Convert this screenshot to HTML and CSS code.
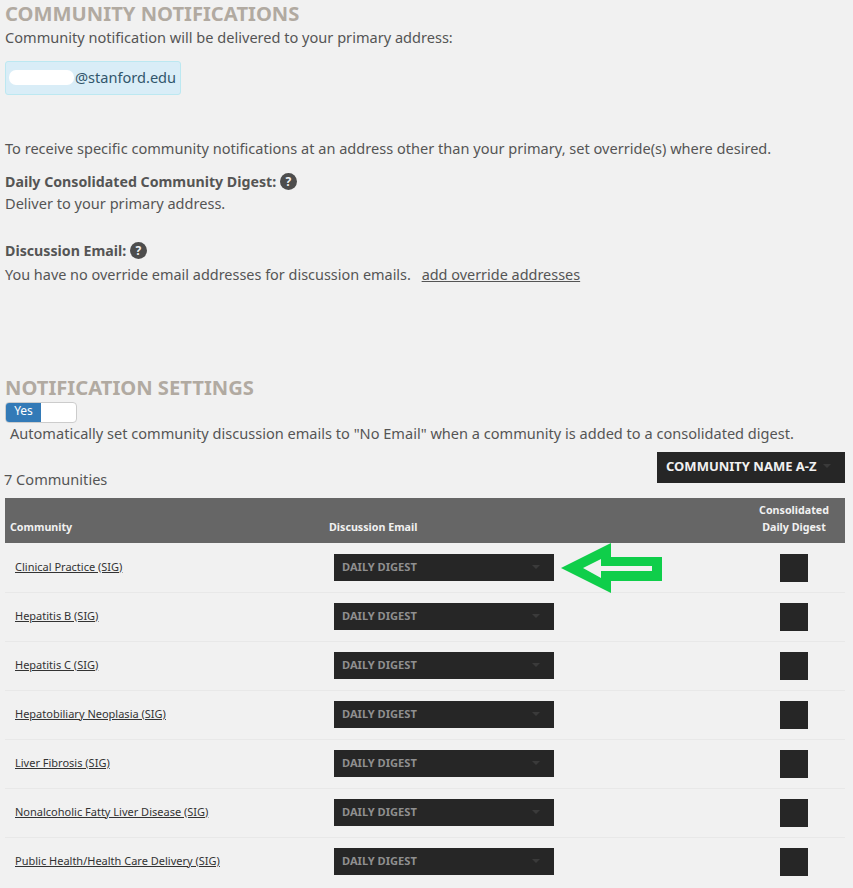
FILE: index.html
```html
<!DOCTYPE html>
<html lang="en">
<head>
  <meta charset="UTF-8">
  <meta name="viewport" content="width=device-width, initial-scale=1.0">
  <title>Community Notifications</title>
  <link rel="stylesheet" href="styles.css">
</head>
<body>
  <h2 class="section-title first-title">COMMUNITY NOTIFICATIONS</h2>
  <p class="line">Community notification will be delivered to your primary address:</p>
  <div class="address"><span class="blot"></span>@stanford.edu</div>

  <p class="line override-note">To receive specific community notifications at an address other than your primary, set override(s) where desired.</p>

  <p class="line label digest-label">Daily Consolidated Community Digest: <span class="help">?</span></p>
  <p class="line digest-text">Deliver to your primary address.</p>

  <p class="line label email-label">Discussion Email: <span class="help">?</span></p>
  <p class="line no-override">You have no override email addresses for discussion emails. <a class="add-link" href="#">add override addresses</a></p>

  <h2 class="section-title settings-title">NOTIFICATION SETTINGS</h2>
  <div class="toggle"><span class="toggle-on">Yes</span><span class="toggle-off"></span></div>
  <p class="line auto-note">Automatically set community discussion emails to "No Email" when a community is added to a consolidated digest.</p>

  <div class="list-bar">
    <span class="count">7 Communities</span>
    <div class="sort">COMMUNITY NAME A-Z<span class="caret"></span></div>
  </div>

  <div class="table">
    <div class="row head">
      <div class="col-name">Community</div>
      <div class="col-email">Discussion Email</div>
      <div class="col-digest">Consolidated<br>Daily Digest</div>
    </div>
    <div class="row">
      <div class="col-name"><a href="#">Clinical Practice (SIG)</a></div>
      <div class="col-email"><div class="select">DAILY DIGEST<span class="caret"></span></div></div>
      <div class="col-digest"><span class="check"></span></div>
    </div>
    <div class="row">
      <div class="col-name"><a href="#">Hepatitis B (SIG)</a></div>
      <div class="col-email"><div class="select">DAILY DIGEST<span class="caret"></span></div></div>
      <div class="col-digest"><span class="check"></span></div>
    </div>
    <div class="row">
      <div class="col-name"><a href="#">Hepatitis C (SIG)</a></div>
      <div class="col-email"><div class="select">DAILY DIGEST<span class="caret"></span></div></div>
      <div class="col-digest"><span class="check"></span></div>
    </div>
    <div class="row">
      <div class="col-name"><a href="#">Hepatobiliary Neoplasia (SIG)</a></div>
      <div class="col-email"><div class="select">DAILY DIGEST<span class="caret"></span></div></div>
      <div class="col-digest"><span class="check"></span></div>
    </div>
    <div class="row">
      <div class="col-name"><a href="#">Liver Fibrosis (SIG)</a></div>
      <div class="col-email"><div class="select">DAILY DIGEST<span class="caret"></span></div></div>
      <div class="col-digest"><span class="check"></span></div>
    </div>
    <div class="row">
      <div class="col-name"><a href="#">Nonalcoholic Fatty Liver Disease (SIG)</a></div>
      <div class="col-email"><div class="select">DAILY DIGEST<span class="caret"></span></div></div>
      <div class="col-digest"><span class="check"></span></div>
    </div>
    <div class="row">
      <div class="col-name"><a href="#">Public Health/Health Care Delivery (SIG)</a></div>
      <div class="col-email"><div class="select">DAILY DIGEST<span class="caret"></span></div></div>
      <div class="col-digest"><span class="check"></span></div>
    </div>
  </div>

  <!-- annotation drawn over the screenshot -->
  <svg class="arrow" width="853" height="888" viewBox="0 0 853 888">
    <path fill="#0fce4a" d="M561 568 611 543V557H662V581H611V593Z"/>
    <path fill="#f1f1f1" d="M583 568 601 559V566H652V571H601V578Z"/>
  </svg>
</body>
</html>
```

FILE: styles.css
```css
html, body {
  margin: 0;
  height: 888px;
  overflow: hidden;
}
body {
  position: relative;
  background-color: #f1f1f1;
  color: #555;
  font-family: 'Noto Sans', sans-serif;
  font-size: 14.57px;
  padding: 0 8px 0 5px;
  box-sizing: border-box;
}
.section-title {
  margin: 0;
  padding-bottom: 1px;
  height: 27px;
  line-height: 27px;
  font-size: 20.2px;
  font-weight: 700;
  color: #b1aaa1;
}
.first-title {
  height: 25px;
  line-height: 27px;
}
.settings-title {
  margin-top: 88px;
}
.line {
  margin: 0;
  height: 22px;
  line-height: 22px;
  white-space: nowrap;
}
.label {
  font-size: 14.2px;
  font-weight: 700;
  color: #555;
}
.address {
  display: flex;
  align-items: center;
  width: 176px;
  height: 34px;
  margin-top: 13px;
  box-sizing: border-box;
  padding-left: 69px;
  padding-bottom: 2px;
  background-color: #d9edf7;
  border: 1px solid #bce8f1;
  border-radius: 3px;
  color: #31566c;
  position: relative;
}
.blot {
  position: absolute;
  left: 3px;
  top: 8px;
  width: 65px;
  height: 15px;
  background-color: #fff;
  border-radius: 7px;
}
.override-note {
  margin-top: 42px;
}
.digest-label {
  margin-top: 12px;
}
.digest-text {
  margin-top: -1px;
}
.email-label {
  margin-top: 26px;
}
.no-override {
  margin-top: 2px;
  font-size: 14.45px;
}
.help {
  display: inline-block;
  width: 17px;
  height: 17px;
  border-radius: 50%;
  background-color: #4d4d4d;
  color: #f1f1f1;
  font-size: 12px;
  line-height: 17px;
  text-align: center;
  vertical-align: 1px;
}
.add-link {
  margin-left: 7px;
  color: #555;
}
.toggle {
  display: flex;
  width: 72px;
  height: 21px;
  box-sizing: border-box;
  border: 1px solid #ccc;
  border-radius: 4px;
  overflow: hidden;
  background-color: #fff;
}
.toggle-on {
  width: 35px;
  background-color: #337ab7;
  color: #fff;
  font-size: 12px;
  line-height: 16px;
  text-align: center;
}
.auto-note {
  margin-top: -1px;
  padding-left: 5px;
}
.list-bar {
  display: flex;
  justify-content: space-between;
  align-items: flex-start;
  margin-top: 8px;
}
.count {
  margin-left: -1px;
  margin-top: 16px;
  line-height: 22px;
}
.sort {
  display: flex;
  align-items: center;
  justify-content: space-between;
  width: 188px;
  height: 31px;
  box-sizing: border-box;
  padding: 0 14px 3px 9px;
  background-color: #262626;
  color: #f1f1f1;
  font-size: 13px;
  font-weight: 700;
}
.caret {
  width: 0;
  height: 0;
  border: 4px solid transparent;
  border-top-color: #3a3a3a;
  border-bottom-width: 0;
}
.table {
  margin-top: 8px;
  width: 840px;
}
.row {
  display: grid;
  grid-template-columns: 324px 1fr 102px;
  align-items: center;
  height: 49px;
  box-sizing: border-box;
  box-shadow: 0 1px 0 #e8e8e8;
  font-size: 11px;
}
.row:last-child {
  box-shadow: none;
}
.row a {
  color: #333;
}
.row .col-name {
  padding-left: 10px;
  padding-bottom: 3px;
}
.row .col-email {
  padding-left: 5px;
}
.col-digest {
  text-align: center;
}
.head {
  align-items: end;
  height: 45px;
  padding-bottom: 7px;
  background-color: #666;
  box-shadow: none;
  color: #f1f1f1;
  font-size: 10.7px;
  font-weight: 700;
  line-height: 17px;
}
.head .col-name {
  padding-left: 5px;
  padding-bottom: 0;
}
.head .col-email {
  padding-left: 0;
}
.select {
  display: flex;
  align-items: center;
  justify-content: space-between;
  width: 220px;
  height: 27px;
  box-sizing: border-box;
  padding: 0 14px 2px 8px;
  background-color: #262626;
  color: #8f8f8f;
  font-size: 11.1px;
  font-weight: 700;
}
.check {
  display: block;
  width: 28px;
  height: 28px;
  margin: 1px auto 0;
  background-color: #262626;
}
.arrow {
  position: absolute;
  left: 0;
  top: 0;
  pointer-events: none;
}
```
